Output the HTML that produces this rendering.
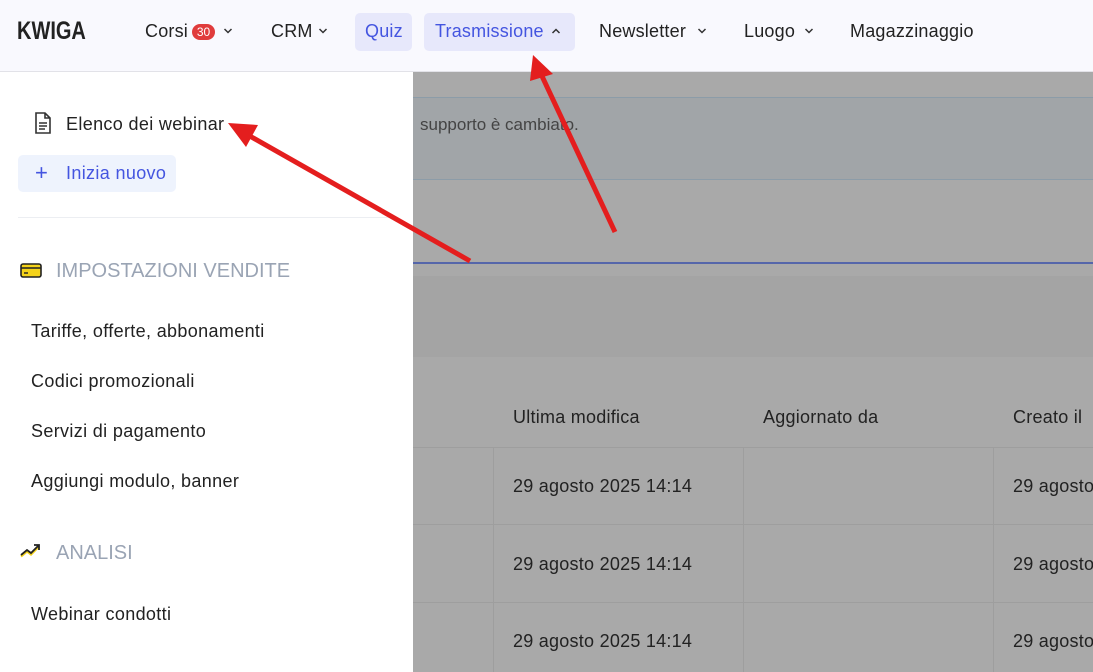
<!DOCTYPE html><html><head><meta charset="utf-8"><style>
*{margin:0;padding:0;box-sizing:border-box}
body{width:1093px;height:672px;overflow:hidden;position:relative;font-family:"Liberation Sans",sans-serif;background:#a9a9a9;color:#222}
.abs{position:absolute;white-space:nowrap}
.hdr{position:absolute;left:0;top:0;width:1093px;height:72px;background:#f9f9fe;border-bottom:1px solid #e2e2e8}
.nav{font-size:18px;color:#222;top:21px;letter-spacing:0.2px}
.pill{position:absolute;top:13px;height:38px;background:#e7e8fb;border-radius:5px}
.side{position:absolute;left:0;top:72px;width:413px;height:600px;background:#fff}
.item{font-size:18px;color:#222;letter-spacing:0.35px}
.sec{font-size:20px;color:#9aa4b4}
.cell{font-size:18px;color:#222;letter-spacing:0.25px}
.chev{position:absolute;top:27px}
</style></head><body>
<div class="abs" style="left:413px;top:97px;width:680px;height:83px;background:#a1a5a8;border-top:1px solid #8c9ca8;border-bottom:1px solid #8c9ca8"></div>
<div class="abs" style="left:420px;top:115px;font-size:17px;color:#444">supporto è cambiato.</div>
<div class="abs" style="left:410px;top:116px;width:2px;height:18px;background:#444"></div>
<div class="abs" style="left:413px;top:262px;width:680px;height:2px;background:#5566aa"></div>
<div class="abs" style="left:413px;top:276px;width:680px;height:81px;background:#a4a4a4"></div>
<div class="abs" style="left:413px;top:447px;width:680px;height:1px;background:#9e9e9e"></div>
<div class="abs" style="left:413px;top:524px;width:680px;height:1px;background:#9e9e9e"></div>
<div class="abs" style="left:413px;top:602px;width:680px;height:1px;background:#9e9e9e"></div>
<div class="abs" style="left:493px;top:447px;width:1px;height:225px;background:#9e9e9e"></div>
<div class="abs" style="left:743px;top:447px;width:1px;height:225px;background:#9e9e9e"></div>
<div class="abs" style="left:993px;top:447px;width:1px;height:225px;background:#9e9e9e"></div>
<div class="abs cell" style="left:513px;top:407px">Ultima modifica</div>
<div class="abs cell" style="left:763px;top:407px">Aggiornato da</div>
<div class="abs cell" style="left:1013px;top:407px">Creato il</div>
<div class="abs cell" style="left:513px;top:476px">29 agosto 2025 14:14</div>
<div class="abs cell" style="left:1013px;top:476px">29 agosto</div>
<div class="abs cell" style="left:513px;top:554px">29 agosto 2025 14:14</div>
<div class="abs cell" style="left:1013px;top:554px">29 agosto</div>
<div class="abs cell" style="left:513px;top:631px">29 agosto 2025 14:14</div>
<div class="abs cell" style="left:1013px;top:631px">29 agosto</div>

<div class="hdr">
<div class="abs" style="left:17px;top:17px;font-size:25px;font-weight:bold;color:#222;transform:scaleX(0.8);transform-origin:left">KWIGA</div>
<div class="abs nav" style="left:145px">Corsi</div>
<div class="abs" style="left:192px;top:24px;width:23px;height:16px;border-radius:8px;background:#e03c3c;color:#fff;font-size:12px;text-align:center;line-height:16px">30</div>
<svg class="chev" style="left:223px" width="10" height="8"><path d="M1.5 2l3.5 3.5 3.5-3.5" fill="none" stroke="#333" stroke-width="1.5"/></svg>
<div class="abs nav" style="left:271px">CRM</div>
<svg class="chev" style="left:318px" width="10" height="8"><path d="M1.5 2l3.5 3.5 3.5-3.5" fill="none" stroke="#333" stroke-width="1.5"/></svg>
<div class="pill" style="left:355px;width:57px"></div>
<div class="abs nav" style="left:365px;color:#4455e0">Quiz</div>
<div class="pill" style="left:424px;width:151px"></div>
<div class="abs nav" style="left:435px;color:#4455e0">Trasmissione</div>
<svg class="chev" style="left:551px" width="10" height="8"><path d="M1.5 6l3.5-3.5 3.5 3.5" fill="none" stroke="#333" stroke-width="1.5"/></svg>
<div class="abs nav" style="left:599px">Newsletter</div>
<svg class="chev" style="left:697px" width="10" height="8"><path d="M1.5 2l3.5 3.5 3.5-3.5" fill="none" stroke="#333" stroke-width="1.5"/></svg>
<div class="abs nav" style="left:744px">Luogo</div>
<svg class="chev" style="left:804px" width="10" height="8"><path d="M1.5 2l3.5 3.5 3.5-3.5" fill="none" stroke="#333" stroke-width="1.5"/></svg>
<div class="abs nav" style="left:850px">Magazzinaggio</div>
</div>

<div class="side">
<svg class="abs" style="left:34px;top:40px" width="18" height="22" viewBox="0 0 18 22"><path d="M2 1h9l5 5v15H2z M11 1v5h5 M5 11h8 M5 14h8 M5 17h6" fill="none" stroke="#333" stroke-width="1.6"/></svg>
<div class="abs item" style="left:66px;top:42px">Elenco dei webinar</div>
<div class="abs" style="left:18px;top:83px;width:158px;height:37px;background:#eef3fd;border-radius:5px"></div>
<div class="abs" style="left:35px;top:88px;font-size:22px;color:#4455e0">+</div>
<div class="abs item" style="left:66px;top:91px;color:#4455e0">Inizia nuovo</div>
<div class="abs" style="left:18px;top:145px;width:377px;height:1px;background:#eceef2"></div>
<svg class="abs" style="left:20px;top:190px" width="22" height="16" viewBox="0 0 22 16"><rect x="1" y="2" width="20" height="13" rx="2" fill="#f5d31a" stroke="#222" stroke-width="1.6"/><line x1="1" y1="6" x2="21" y2="6" stroke="#222" stroke-width="1.6"/><line x1="4" y1="11" x2="8" y2="11" stroke="#222" stroke-width="1.4"/></svg>
<div class="abs sec" style="left:56px;top:188px">IMPOSTAZIONI VENDITE</div>
<div class="abs item" style="left:31px;top:249px">Tariffe, offerte, abbonamenti</div>
<div class="abs item" style="left:31px;top:299px">Codici promozionali</div>
<div class="abs item" style="left:31px;top:349px">Servizi di pagamento</div>
<div class="abs item" style="left:31px;top:399px">Aggiungi modulo, banner</div>
<svg class="abs" style="left:20px;top:470px" width="22" height="16" viewBox="0 0 22 16"><path d="M1 13l6-5 4 3 8-8" fill="none" stroke="#f5d31a" stroke-width="2.2" transform="translate(0,1.5)"/><path d="M1 13l6-5 4 3 8-8M14 3h5v5" fill="none" stroke="#222" stroke-width="1.8"/></svg>
<div class="abs sec" style="left:56px;top:470px">ANALISI</div>
<div class="abs item" style="left:31px;top:532px">Webinar condotti</div>
</div>

<svg class="abs" style="left:0;top:0" width="1093" height="672"><g stroke="#e41e1e" stroke-width="5" fill="#e41e1e"><line x1="470" y1="261" x2="248" y2="135"/><polygon points="228,123 258,125 246,147" stroke="none"/><line x1="615" y1="232" x2="541" y2="74"/><polygon points="533,55 553,74 530,81" stroke="none"/></g></svg>
</body></html>
